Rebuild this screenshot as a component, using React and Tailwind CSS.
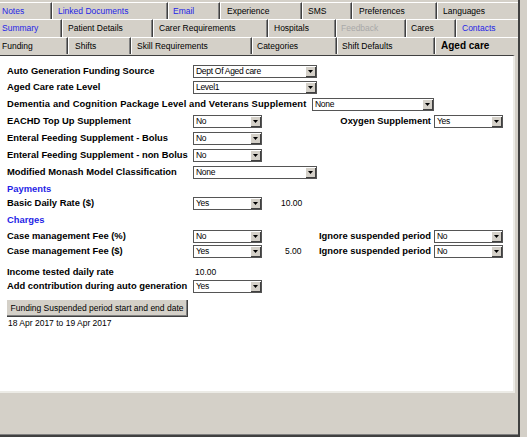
import React from "react";

const FONT = "font-['Liberation_Sans',Arial,sans-serif]";

function Tab({ label, className = "", color = "text-black", first = false, last = false, bold = false }) {
  return (
    <div
      className={`flex h-full shrink-0 items-center border-t border-t-white ${first ? "" : "border-l border-l-white"} ${last ? "flex-1" : "border-r border-r-[#404040] shadow-[inset_-1px_0_0_#808080]"} ${bold ? "text-[10px] font-bold" : "text-[8.5px]"} ${color} ${className}`}
    >
      <span className="whitespace-nowrap leading-none">{label}</span>
    </div>
  );
}

function Arrow() {
  return (
    <svg width="5" height="3" viewBox="0 0 5 3">
      <path d="M0 0H5L2.5 3Z" fill="#000" />
    </svg>
  );
}

function Select({ value, className = "" }) {
  return (
    <div className={`flex h-[13px] shrink-0 border border-[#555] bg-white ${className}`}>
      <span className="flex flex-1 items-center overflow-hidden whitespace-nowrap pl-[2px] text-[8.5px] leading-none tracking-[-0.3px] text-black">
        {value}
      </span>
      <span className="flex w-[11px] items-center justify-center bg-[#d4d0c8] shadow-[inset_1px_1px_0_#fff,inset_-1px_-1px_0_#404040]">
        <Arrow />
      </span>
    </div>
  );
}

function Label({ children, className = "w-[186px]", color = "text-black" }) {
  return (
    <div className={`shrink-0 whitespace-nowrap text-[9.4px] font-bold leading-none ${color} ${className}`}>
      {children}
    </div>
  );
}

function Row({ children, className = "" }) {
  return <div className={`flex h-[14px] w-[496px] items-center ${className}`}>{children}</div>;
}

function RightGroup({ label, value }) {
  return (
    <div className="ml-auto flex items-center gap-[3px]">
      <Label className="">{label}</Label>
      <Select value={value} className="w-[69px]" />
    </div>
  );
}

function Plain({ children, className = "" }) {
  return <span className={`whitespace-nowrap text-[8.5px] leading-none text-black ${className}`}>{children}</span>;
}

export default function App() {
  return (
    <div className={`h-[437px] w-[527px] overflow-hidden bg-[#d4d0c8] ${FONT}`}>
      <div className="flex h-[437px] w-[520px] flex-col border-r-2 border-b-2 border-[#404040] shadow-[inset_0_-1px_0_#808080]">
        {/* tab strip, three rows */}
        <div className="mt-[2px] flex h-[17px]">
          <Tab label="Notes" first className="w-[52px] pl-[2px]" color="text-[#1f1fe6]" />
          <Tab label="Linked Documents" className="w-[116px] pl-[5px]" color="text-[#1f1fe6]" />
          <Tab label="Email" className="w-[52px] pl-[4px]" color="text-[#1f1fe6]" />
          <Tab label="Experience" className="w-[82px] pl-[6px]" />
          <Tab label="SMS" className="w-[50px] pl-[5px]" />
          <Tab label="Preferences" className="w-[85px] pl-[6px]" />
          <Tab label="Languages" last className="pl-[5px]" />
        </div>
        <div className="flex h-[18px]">
          <Tab label="Summary" first className="w-[62px] pl-[2px]" color="text-[#1f1fe6]" />
          <Tab label="Patient Details" className="w-[91px] pl-[5px]" />
          <Tab label="Carer Requirements" className="w-[115px] pl-[5px]" />
          <Tab label="Hospitals" className="w-[68px] pl-[5px]" />
          <Tab label="Feedback" className="w-[70px] pl-[4px]" color="text-[#a9a9a9]" />
          <Tab label="Cares" className="w-[50px] pl-[4px]" />
          <Tab label="Contacts" last className="pl-[5px]" color="text-[#1f1fe6]" />
        </div>
        <div className="flex h-[18px] pb-[1px]">
          <Tab label="Funding" first className="w-[68px] pl-[2px]" />
          <Tab label="Shifts" className="w-[63px] pl-[6px]" />
          <Tab label="Skill Requirements" className="w-[121px] pl-[5px]" />
          <Tab label="Categories" className="w-[85px] pl-[4px]" />
          <Tab label="Shift Defaults" className="w-[98px] pl-[4px]" />
          <Tab label="Aged care" last bold className="pl-[5px]" />
        </div>

        {/* white form panel */}
        <div className="flex h-[338px] w-[515px] flex-col border-t border-r-2 border-b-2 border-t-[#404040] border-r-[#ecebe6] border-b-[#ecebe6] bg-white pl-[7px] pt-[8px]">
          <Row>
            <Label>Auto Generation Funding Source</Label>
            <Select value="Dept Of Aged care" className="w-[124px]" />
          </Row>
          <Row className="mt-[2px]">
            <Label>Aged Care rate Level</Label>
            <Select value="Level1" className="w-[124px]" />
          </Row>
          <Row className="mt-[3px]">
            <Label className="w-[305px] tracking-[0.12px]">Dementia and Cognition Package Level and Veterans Supplement</Label>
            <Select value="None" className="w-[122px]" />
          </Row>
          <Row className="mt-[3px]">
            <Label>EACHD Top Up Supplement</Label>
            <Select value="No" className="w-[69px]" />
            <RightGroup label="Oxygen Supplement" value="Yes" />
          </Row>
          <Row className="mt-[3px]">
            <Label>Enteral Feeding Supplement - Bolus</Label>
            <Select value="No" className="w-[69px]" />
          </Row>
          <Row className="mt-[3px]">
            <Label>Enteral Feeding Supplement - non Bolus</Label>
            <Select value="No" className="w-[69px]" />
          </Row>
          <Row className="mt-[3px]">
            <Label>Modified Monash Model Classification</Label>
            <Select value="None" className="w-[124px]" />
          </Row>
          <Row className="mt-[3px]">
            <Label color="text-[#1f1fe6]">Payments</Label>
          </Row>
          <Row>
            <Label>Basic Daily Rate ($)</Label>
            <Select value="Yes" className="w-[69px]" />
            <Plain className="ml-[19px]">10.00</Plain>
          </Row>
          <Row className="mt-[3px]">
            <Label color="text-[#1f1fe6]">Charges</Label>
          </Row>
          <Row className="mt-[2px]">
            <Label>Case management Fee (%)</Label>
            <Select value="No" className="w-[69px]" />
            <RightGroup label="Ignore suspended period" value="No" />
          </Row>
          <Row className="mt-[1px]">
            <Label>Case management Fee ($)</Label>
            <Select value="Yes" className="w-[69px]" />
            <Plain className="ml-[23px]">5.00</Plain>
            <RightGroup label="Ignore suspended period" value="No" />
          </Row>
          <Row className="mt-[7px]">
            <Label>Income tested daily rate</Label>
            <Plain className="pl-[2px]">10.00</Plain>
          </Row>
          <Row>
            <Label>Add contribution during auto generation</Label>
            <Select value="Yes" className="w-[69px]" />
          </Row>
          <button
            type="button"
            className="-ml-[1px] mt-[6px] flex h-[18px] w-[182px] items-center justify-center bg-[#d4d0c8] text-[8.5px] leading-none text-black shadow-[inset_1px_1px_0_#fff,inset_-1px_-1px_0_#404040,inset_-2px_-2px_0_#808080]"
          >
            Funding Suspended period start and end date
          </button>
          <div className="flex h-[12px] items-center pl-[1px]">
            <Plain>18 Apr 2017 to 19 Apr 2017</Plain>
          </div>
        </div>
      </div>
    </div>
  );
}
